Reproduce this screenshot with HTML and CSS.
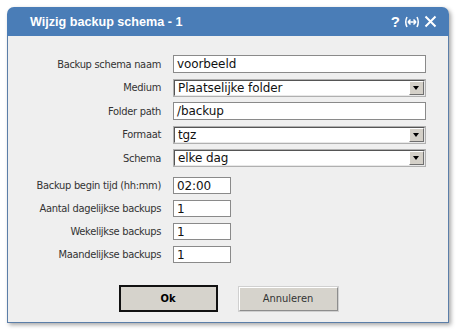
FILE: index.html
```html
<!DOCTYPE html>
<html lang="nl">
<head>
    <meta charset="UTF-8">
    <title>Wijzig backup schema - 1</title>
    <link rel="stylesheet" href="styles.css">
</head>
<body>
    <div class="dialog">
        <div class="titlebar">
            <span class="title">Wijzig backup schema - 1</span>
            <div class="tools">
                <span class="help">?</span>
                <svg class="resize" width="16" height="12" viewBox="0 0 16 12">
                    <path d="M3 1 Q0.5 6 3 11 M13 1 Q15.5 6 13 11 M4 6 H12 M4 6 L6.5 3.5 M4 6 L6.5 8.5 M12 6 L9.5 3.5 M12 6 L9.5 8.5" fill="none" stroke="#fff" stroke-width="1.5"/>
                </svg>
                <svg class="close" width="13" height="13" viewBox="0 0 13 13">
                    <path d="M1.5 1.5 L11.5 11.5 M11.5 1.5 L1.5 11.5" stroke="#fff" stroke-width="2"/>
                </svg>
            </div>
        </div>
        <div class="content">
            <div class="form">
                <label>Backup schema naam</label>
                <div class="input wide">voorbeeld</div>

                <label>Medium</label>
                <div class="select">Plaatselijke folder<span class="arrow"></span></div>

                <label>Folder path</label>
                <div class="input wide">/backup</div>

                <label>Formaat</label>
                <div class="select">tgz<span class="arrow"></span></div>

                <label>Schema</label>
                <div class="select">elke dag<span class="arrow"></span></div>
            </div>
            <div class="form small">
                <label>Backup begin tijd (hh:mm)</label>
                <div class="input short">02:00</div>

                <label>Aantal dagelijkse backups</label>
                <div class="input short">1</div>

                <label>Wekelijkse backups</label>
                <div class="input short">1</div>

                <label>Maandelijkse backups</label>
                <div class="input short">1</div>
            </div>
            <div class="buttons">
                <button class="button default">Ok</button>
                <button class="button">Annuleren</button>
            </div>
        </div>
    </div>
</body>
</html>
```
FILE: styles.css
```css
body {
    margin: 0;
    background-color: #fff;
    font-family: 'DejaVu Sans', sans-serif;
    color: #000;
}
.dialog {
    margin: 7px;
    width: 442px;
    height: 316px;
    display: flex;
    flex-direction: column;
    border-radius: 7px 7px 0 0;
    background-color: #efefef;
    box-shadow: 2px 2px 4px rgba(0, 0, 0, 0.35);
}
.titlebar {
    height: 29px;
    display: flex;
    align-items: center;
    padding: 0 12px 0 23px;
    background-color: #4a7db7;
    border-radius: 7px 7px 0 0;
    color: #fff;
}
.title {
    flex: 1;
    font-family: 'Liberation Sans', sans-serif;
    font-weight: bold;
    font-size: 12.6px;
}
.tools {
    display: flex;
    align-items: center;
    gap: 4px;
}
.help {
    font-family: 'Liberation Sans', sans-serif;
    font-weight: bold;
    font-size: 15px;
}
.content {
    flex: 1;
    display: flex;
    flex-direction: column;
    border: 1px solid #5b7ea8;
    border-top: none;
    padding-top: 19px;
}
.form {
    display: grid;
    grid-template-columns: 153px 253px;
    column-gap: 12px;
    row-gap: 5.5px;
    grid-auto-rows: 18px;
}
.form.small {
    margin-top: 10px;
    row-gap: 6px;
    grid-auto-rows: 17px;
}
label {
    font-family: 'DejaVu Sans', sans-serif;
    font-stretch: condensed;
    font-size: 11px;
    letter-spacing: -0.3px;
    text-align: right;
    align-self: center;
    color: #333;
}
.input, .select {
    box-sizing: border-box;
    font-size: 12px;
    letter-spacing: -0.1px;
    color: #111;
    background-color: #fff;
    display: flex;
    align-items: center;
    padding-left: 3px;
    white-space: nowrap;
}
.input {
    border: 1px solid #8a8a8a;
}
.input.short {
    width: 58px;
}
.select {
    position: relative;
    border: 2px solid;
    border-color: #555 #e8e8e8 #e8e8e8 #555;
    outline: 1px solid #b0b0b0;
    outline-offset: -1px;
}
.arrow {
    position: absolute;
    right: 0;
    top: 0;
    width: 15px;
    height: 14px;
    box-sizing: border-box;
    background-color: #d4d0c8;
    border: 1px solid;
    border-color: #fff #6f6f6f #6f6f6f #fff;
}
.arrow::after {
    content: '';
    position: absolute;
    left: 3px;
    top: 4px;
    border-left: 3.5px solid transparent;
    border-right: 3.5px solid transparent;
    border-top: 4px solid #000;
}
.buttons {
    margin-top: auto;
    margin-bottom: 10px;
    display: flex;
    justify-content: center;
    align-items: center;
    gap: 21px;
}
.button {
    width: 99px;
    height: 24px;
    font-family: 'DejaVu Sans', sans-serif;
    font-stretch: condensed;
    font-size: 11px;
    color: #333;
    background-color: #d6d3cc;
    border: 1px solid;
    border-color: #fff #8d8d8d #8d8d8d #fff;
    box-shadow: 0 0 0 1px #d0d0d0;
}
.button.default {
    height: 27px;
    font-weight: bold;
    color: #000;
    border: 2px solid #111;
    box-shadow: none;
}
```
